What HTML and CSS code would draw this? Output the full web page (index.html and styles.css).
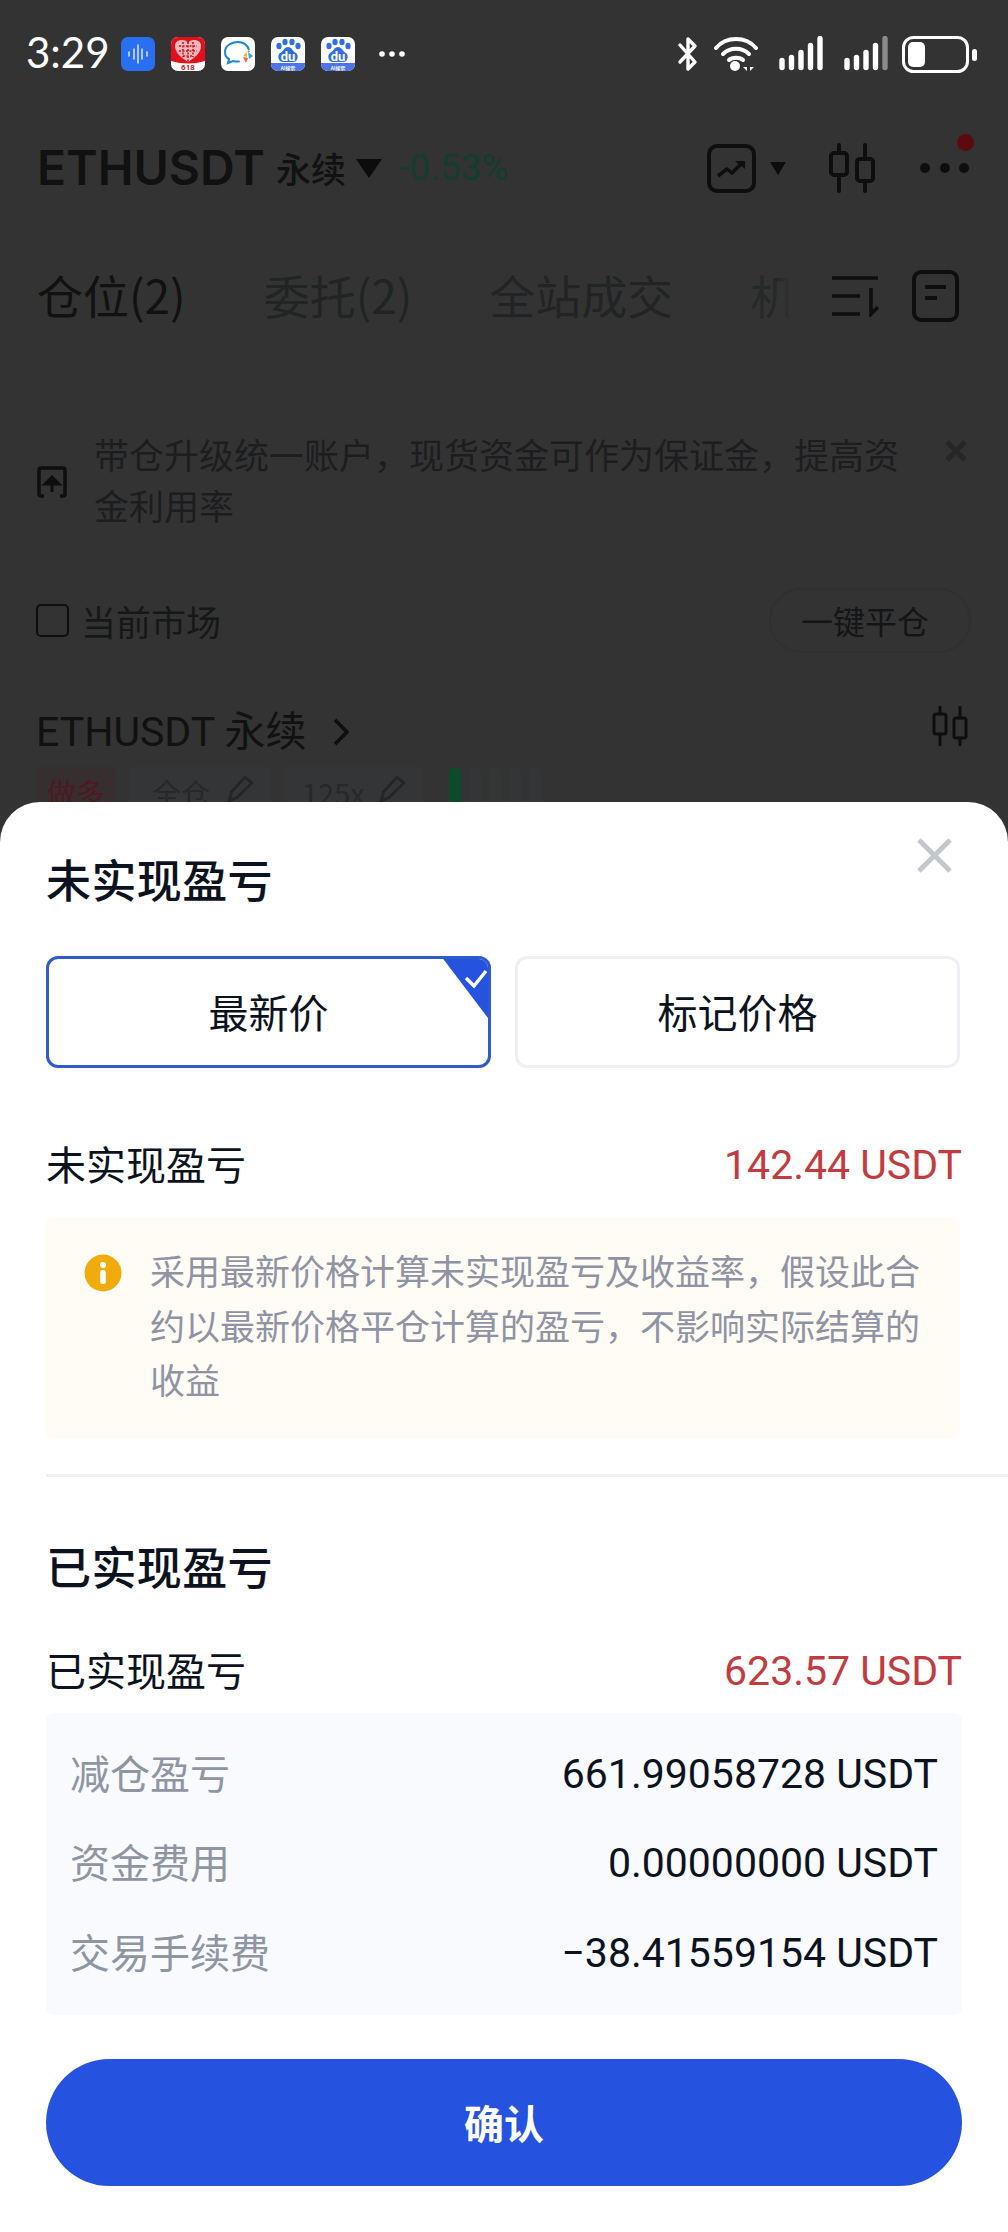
FILE: index.html
```html
<!DOCTYPE html>
<html lang="zh">
<head>
<meta charset="utf-8">
<title>未实现盈亏</title>
<link rel="stylesheet" href="styles.css">
</head>
<body>
<div class="page">
  <div class="behind">
    <div class="status">
      <span class="time">3:29</span>
      <div class="apps">
        <svg class="app" viewBox="0 0 34 34"><rect width="34" height="34" rx="7" fill="#2a6ff2"/><path d="M8 15v4M13 12v10M17 8v18M21 12v10M26 15v4" stroke="#dce8ff" stroke-width="1.5" stroke-linecap="round"/></svg>
        <svg class="app" viewBox="0 0 34 34"><rect width="34" height="34" rx="7" fill="#fff"/><path d="M0 7a7 7 0 0 1 7-7h20a7 7 0 0 1 7 7v17q-17 5-34 0z" fill="#e3101b"/><path d="M17 25C9 20 4 15 4 9c0-4 3-6 7-6 3 0 5 1 6 3 1-2 3-3 6-3 4 0 7 2 7 6 0 6-5 11-13 16z" fill="#f7b9bd"/><path d="M8 9h18M8 14h18M12 19h10M12 5v15M17 5v20M22 5v15" stroke="#d8101b" stroke-width="1.6" stroke-dasharray="2 1.5"/><text x="17" y="33" class="t618">618</text></svg>
        <svg class="app" viewBox="0 0 34 34"><rect width="34" height="34" rx="7" fill="#fff"/><path d="M17 5C10 5 4 9 4 15c0 3 2 6 4 7l-1 4 5-2c2 .5 4 .7 6 .5" fill="none" stroke="#1b87d6" stroke-width="2" stroke-linecap="round"/><path d="M17 5c5 0 10 3 11 8" fill="none" stroke="#1b87d6" stroke-width="2"/><path d="M27 15l5 4-4 3z" fill="#3aa3e0"/><path d="M26 15l-4 4 4 1z" fill="#f2b632"/><path d="M22 20l5 1-2 5z" fill="#ec6a2d"/><path d="M26 15l2-2 1 2z" fill="#6cb33f"/></svg>
        <svg class="app" viewBox="0 0 34 34"><rect width="34" height="34" rx="7" fill="#fff"/><path d="M0 26h34v1a7 7 0 0 1-7 7H7a7 7 0 0 1-7-7z" fill="#4f74e8"/><g fill="#2f6fe0"><ellipse cx="8" cy="9" rx="2.6" ry="3.2"/><ellipse cx="14" cy="5" rx="2.6" ry="3.3"/><ellipse cx="21" cy="5" rx="2.6" ry="3.3"/><ellipse cx="27" cy="9" rx="2.6" ry="3.2"/><path d="M17 10c4 0 4 4 8 6 3 2 2 9-3 9H12c-5 0-6-7-3-9 4-2 4-6 8-6z"/></g><text x="17" y="24" class="tdu">du</text><text x="17" y="32.500" class="tai">AI搜索</text></svg>
        <svg class="app" viewBox="0 0 34 34"><rect width="34" height="34" rx="7" fill="#fff"/><path d="M0 26h34v1a7 7 0 0 1-7 7H7a7 7 0 0 1-7-7z" fill="#4f74e8"/><g fill="#2f6fe0"><ellipse cx="8" cy="9" rx="2.6" ry="3.2"/><ellipse cx="14" cy="5" rx="2.6" ry="3.3"/><ellipse cx="21" cy="5" rx="2.6" ry="3.3"/><ellipse cx="27" cy="9" rx="2.6" ry="3.2"/><path d="M17 10c4 0 4 4 8 6 3 2 2 9-3 9H12c-5 0-6-7-3-9 4-2 4-6 8-6z"/></g><text x="17" y="24" class="tdu">du</text><text x="17" y="32.500" class="tai">AI搜索</text></svg>
        <svg class="more" viewBox="0 0 26 6"><circle cx="3" cy="3" r="2.8"/><circle cx="13" cy="3" r="2.8"/><circle cx="23" cy="3" r="2.8"/></svg>
      </div>
      <div class="sys">
        <svg class="bt" viewBox="0 0 23 36"><path d="M3 9l15 17-7 7V3l7 7L3 26" fill="none" stroke="#fff" stroke-width="3.4" stroke-linecap="round" stroke-linejoin="round"/></svg>
        <svg class="wifi" viewBox="0 0 44 36"><g fill="none" stroke="#fff" stroke-width="4" stroke-linecap="round"><path d="M2 12C12 0 32 0 42 12"/><path d="M9 18c7-7 19-7 26 0"/><path d="M15 24c3-3 11-3 14 0"/></g><circle cx="21" cy="30" r="5" fill="#fff"/><path d="M33 26v9l-4-4h4zM36 26v9l4-4h-4z" fill="#fff"/></svg>
        <svg class="sig" viewBox="0 0 44 36"><g stroke="#fff" stroke-width="5.400" stroke-linecap="round"><path d="M3 24.500v7M12.500 21.500v10M22 16.500v15M31.500 9.500v22M41 2.500v29"/></g></svg>
        <svg class="sig" viewBox="0 0 44 36"><g stroke="#fff" stroke-width="5.400" stroke-linecap="round"><path d="M3 24.500v7M12.500 21.500v10M22 16.500v15M31.500 9.500v22"/><path d="M41 2.500v29" stroke="#8b8b8b"/></g></svg>
        <svg class="batt" viewBox="0 0 75 37"><rect x="1.500" y="1.500" width="64" height="34" rx="10" fill="none" stroke="#fff" stroke-width="3"/><rect x="6" y="6" width="17" height="25" rx="5" fill="#fff"/><rect x="70" y="13" width="5" height="12" rx="2.500" fill="#fff"/></svg>
      </div>
    </div>

    <div class="symbolbar">
      <span class="sym">ETHUSDT</span>
      <span class="perp">永续</span>
      <span class="tri"></span>
      <span class="chg">-0.53%</span>
      <div class="symtools">
        <svg class="ic-chart" viewBox="0 0 49 49"><rect x="2" y="2" width="45" height="45" rx="8" fill="none" stroke="#0e0e0e" stroke-width="4"/><path d="M11 32l9-7 5 4 11-11" fill="none" stroke="#0e0e0e" stroke-width="3.500" stroke-linejoin="round"/><path d="M28 17h10v8z" fill="#0e0e0e"/></svg>
        <span class="tri small"></span>
        <svg class="ic-candle" viewBox="0 0 47 50"><g fill="none" stroke="#0e0e0e" stroke-width="4" stroke-linecap="round"><path d="M10 2v8M10 32v16M36 2v14M36 38v10"/><rect x="2" y="10" width="16" height="22" rx="3"/><rect x="28" y="16" width="16" height="22" rx="3"/></g></svg>
        <svg class="ic-dots" viewBox="0 0 50 10"><circle cx="5" cy="5" r="5"/><circle cx="25" cy="5" r="5"/><circle cx="44" cy="5" r="5"/></svg>
      </div>
      <span class="reddot"></span>
    </div>

    <div class="tabsbar">
      <span class="tab on">仓位(2)</span>
      <span class="tab">委托(2)</span>
      <span class="tab">全站成交</span>
      <span class="tab fade">机</span>
      <svg class="ic-sort" viewBox="0 0 48 42"><path d="M1 3h46M1 21h28M1 39h28M40 13v26l7-7" fill="none" stroke="#0e0e0e" stroke-width="3.600"/></svg>
      <svg class="ic-doc" viewBox="0 0 47 52"><rect x="2" y="2" width="43" height="48" rx="7" fill="none" stroke="#0e0e0e" stroke-width="4"/><path d="M13 17h21M13 28h12" stroke="#0e0e0e" stroke-width="4"/></svg>
    </div>

    <div class="notice">
      <svg class="ic-up" viewBox="0 0 30 32"><path d="M7 30H4a2 2 0 0 1-2-2V4a2 2 0 0 1 2-2h22a2 2 0 0 1 2 2v24a2 2 0 0 1-2 2h-3" fill="none" stroke="#0e0e0e" stroke-width="3.500"/><path d="M15 26V13M8 18l7-7 7 7z" stroke="#0e0e0e" stroke-width="3" fill="#0e0e0e"/></svg>
      <p class="notice-text">带仓升级统一账户，现货资金可作为保证金，提高资金利用率</p>
      <svg class="ic-x" viewBox="0 0 24 24"><path d="M3 3l18 18M21 3L3 21" stroke="#242628" stroke-width="5"/></svg>
    </div>

    <div class="filter">
      <span class="check"></span>
      <span class="filter-label">当前市场</span>
      <span class="closeall">一键平仓</span>
    </div>

    <div class="pos-head">
      <span class="pos-name">ETHUSDT 永续</span>
      <svg class="ic-chev" viewBox="0 0 16 28"><path d="M2 2l12 12L2 26" fill="none" stroke="#0e0e0e" stroke-width="3.600"/></svg>
      <svg class="ic-candle-s" viewBox="0 0 36 40"><g fill="none" stroke="#0e0e0e" stroke-width="3" stroke-linecap="round"><path d="M8 1v7M8 28v11M28 1v11M28 32v7"/><rect x="2" y="8" width="12" height="20" rx="2"/><rect x="22" y="12" width="12" height="20" rx="2"/></g></svg>
    </div>

    <div class="tags">
      <span class="tag red">做多</span>
      <span class="tag grey">全仓<svg class="pen" viewBox="0 0 24 24"><path d="M2 23l2-8L16 2l6 5L9 20z" fill="none" stroke="#232527" stroke-width="2.500"/></svg></span>
      <span class="tag grey lever">125x<svg class="pen" viewBox="0 0 24 24"><path d="M2 23l2-8L16 2l6 5L9 20z" fill="none" stroke="#232527" stroke-width="2.500"/></svg></span>
      <div class="bars"><i class="bar on"></i><i class="bar"></i><i class="bar"></i><i class="bar"></i><i class="bar"></i></div>
    </div>
  </div>

  <div class="sheet">
    <div class="sheet-head">
      <h2 class="h">未实现盈亏</h2>
      <svg class="close" viewBox="0 0 36 36"><path d="M2 2l32 32M34 2L2 34" stroke="#c3c6cd" stroke-width="5"/></svg>
    </div>
    <div class="choice">
      <div class="opt sel">最新价
        <svg class="corner" viewBox="0 0 50 66"><path d="M0 0h38a12 12 0 0 1 12 12v54z" fill="#2553e0"/><path d="M25 22l8 8 12-15" fill="none" stroke="#fff" stroke-width="3.500"/></svg>
      </div>
      <div class="opt">标记价格</div>
    </div>
    <div class="row first"><span class="lbl">未实现盈亏</span><span class="num red-n">142.44 USDT</span></div>
    <div class="tip">
      <svg class="info" viewBox="0 0 38 38"><circle cx="19" cy="19" r="18.500" fill="#f0ac0c"/><circle cx="19" cy="11" r="3" fill="#fff"/><rect x="16.200" y="16" width="5.600" height="14" rx="2.500" fill="#fff"/></svg>
      <p class="tip-text">采用最新价格计算未实现盈亏及收益率，假设此合约以最新价格平仓计算的盈亏，不影响实际结算的收益</p>
    </div>
    <div class="rule"></div>
    <h2 class="h h2nd">已实现盈亏</h2>
    <div class="row second"><span class="lbl">已实现盈亏</span><span class="num red-n">623.57 USDT</span></div>
    <div class="detail">
      <div class="drow"><span class="lbl dl">减仓盈亏</span><span class="num">661.99058728 USDT</span></div>
      <div class="drow"><span class="lbl dl">资金费用</span><span class="num">0.00000000 USDT</span></div>
      <div class="drow"><span class="lbl dl">交易手续费</span><span class="num">−38.41559154 USDT</span></div>
    </div>
    <div class="confirm">确认</div>
  </div>
</div>
</body>
</html>
```

FILE: styles.css
```css
* { box-sizing: border-box; }
html, body { margin: 0; padding: 0; }
body {
  width: 1008px;
  height: 2232px;
  overflow: hidden;
  background: #333333;
  font-family: "Noto Sans CJK SC", "Roboto", sans-serif;
}
.page { display: flex; flex-direction: column; height: 2232px; }
.behind { height: 802px; overflow: hidden; flex: none; color: #111; }

/* status bar */
.status { display: flex; align-items: center; height: 34px; margin-top: 37px; padding-left: 26px; position: relative; }
.time { font-family: "Lato", "Roboto", sans-serif; font-size: 42px; line-height: 30px; padding-bottom: 4px; color: #fff; width: 95px; }
.apps { display: flex; align-items: center; gap: 16px; }
.app { width: 34px; height: 34px; display: block; }
.more { width: 26px; height: 6px; fill: #fff; margin-left: 8px; }
.sys { display: flex; align-items: center; margin-left: auto; padding-right: 31px; }
.bt { width: 23px; height: 36px; margin-right: 14px; }
.wifi { width: 44px; height: 36px; margin-right: 21px; }
.sig { width: 44px; height: 36px; margin-right: 21px; }
.sig + .batt { margin-left: -7px; }
.batt { width: 75px; height: 37px; }
.t618 { font: 700 8px "Roboto", sans-serif; fill: #d8101b; text-anchor: middle; }
.tdu { font: 700 13px "Roboto", sans-serif; fill: #fff; text-anchor: middle; }
.tai { font: 500 5px "Noto Sans CJK SC", sans-serif; fill: #fff; text-anchor: middle; }

/* symbol */
.symbolbar { display: flex; align-items: center; height: 52px; margin-top: 71px; padding-left: 37px; position: relative; }
.sym { font: 600 48px/52px "Inter", "Roboto", sans-serif; color: #111; }
.perp { font-size: 35px; font-weight: 500; line-height: 52px; margin-left: 11px; color: #111; }
.tri { width: 0; height: 0; border-left: 13px solid transparent; border-right: 13px solid transparent; border-top: 19px solid #0c0c0c; margin-left: 10px; }
.tri.small { border-left-width: 8.5px; border-right-width: 8.5px; border-top-width: 13px; margin-left: 14px; }
.chg { font: 400 37px/52px "Roboto", sans-serif; color: #123d30; margin-left: 17px; }
.symtools { display: flex; align-items: center; margin-left: auto; padding-right: 38px; }
.ic-chart { width: 49px; height: 49px; }
.ic-candle { width: 47px; height: 50px; margin-left: 43px; }
.ic-dots { width: 50px; height: 10px; fill: #0e0e0e; margin-left: 44px; }
.reddot { position: absolute; right: 34px; top: -8px; width: 17px; height: 17px; border-radius: 50%; background: #5c0a0e; }

/* tabs */
.tabsbar { display: flex; align-items: center; height: 52px; margin-top: 76px; padding-left: 37px; font-size: 46px; }
.tab { line-height: 48px; padding-bottom: 4px; color: #212425; margin-right: 77px; white-space: nowrap; }
.tab.on { color: #111; margin-right: 78px; }
.tab.fade { margin-right: 0; color: #26292a; -webkit-mask-image: linear-gradient(to right, #000 60%, transparent 92%); mask-image: linear-gradient(to right, #000 60%, transparent 92%); }
.ic-sort { width: 48px; height: 42px; margin-left: 35px; }
.ic-doc { width: 47px; height: 52px; margin-left: 33px; }

/* notice */
.notice { display: flex; align-items: center; margin-top: 103px; padding: 0 37px; position: relative; height: 108px; }
.ic-up { width: 30px; height: 32px; flex: none; margin-top: 5px; }
.notice-text { margin: 0 0 0 27px; width: 810px; font-size: 35px; line-height: 51px; color: #1c1d1f; }
.ic-x { width: 24px; height: 24px; position: absolute; right: 40px; top: 14px; }

/* filter */
.filter { display: flex; align-items: center; height: 65px; margin-top: 55px; padding-left: 36px; }
.check { width: 33px; height: 33px; border: 2.500px solid #0e0e0e; border-radius: 5px; }
.filter-label { font-size: 35px; line-height: 40px; margin-left: 12px; color: #161718; }
.closeall { margin-left: auto; margin-right: 37px; width: 202px; height: 65px; border: 2px solid #2f3031; border-radius: 33px; padding-right: 10px; text-align: center; font-size: 32px; line-height: 60px; color: #141516; }

/* position */
.pos-head { display: flex; align-items: center; height: 44px; margin-top: 57px; padding: 0 40px 0 36px; }
.pos-name { font: 400 41px/44px "Roboto", "Noto Sans CJK SC", sans-serif; color: #111; white-space: nowrap; }
.ic-chev { width: 16px; height: 28px; margin-left: 26px; }
.ic-candle-s { width: 36px; height: 40px; margin-left: auto; margin-top: -12px; }
.tags { display: flex; align-items: flex-start; height: 50px; margin-top: 13px; padding-left: 36px; gap: 14px; }
.tag { display: flex; align-items: center; height: 50px; border-radius: 5px; font-size: 29px; line-height: 50px; padding: 0 12px; gap: 17px; white-space: nowrap; }
.tag.red { background: #362e2f; color: #4c1a1f; width: 80px; justify-content: center; }
.tag.grey { background: #343536; color: #26282a; padding: 0 16px 0 22px; }
.tag.grey.lever { padding-left: 18px; gap: 14px; }
.pen { width: 27px; height: 27px; margin-top: -8px; }
.bars { display: flex; gap: 8px; margin-left: 13px; }
.bar { display: block; width: 12px; height: 50px; border-radius: 6px; background: #343536; }
.bar.on { background: #0d4a2b; }

/* sheet */
.sheet { flex: 1; background: #fff; border-radius: 40px 40px 0 0; padding: 0 46px; position: relative; color: #0c1220; }
.sheet-head { display: flex; align-items: center; justify-content: space-between; padding-top: 52px; height: 106px; }
.h { margin: 0; font-size: 45px; letter-spacing: .4px; line-height: 50px; padding-bottom: 4px; font-weight: 500; color: #0c1220; }
.close { position: absolute; right: 56px; top: 36px; width: 35px; height: 35px; }
.choice { display: grid; grid-template-columns: 445px 445px; gap: 24px; margin-top: 48px; }
.opt { position: relative; height: 112px; border: 3px solid #eef0f4; border-radius: 12px; padding-bottom: 2px; display: flex; align-items: center; justify-content: center; font-size: 40px; font-weight: 400; color: #0c1220; overflow: hidden; }
.opt.sel { border: 3px solid #2f5cc8; }
.corner { position: absolute; right: -3px; top: -3px; width: 50px; height: 66px; }
.row { display: flex; justify-content: space-between; align-items: center; height: 50px; color: #0c1220; }
.lbl { font-size: 40px; line-height: 46px; padding-bottom: 4px; white-space: nowrap; }
.row.first { margin-top: 72px; }
.num { font: 400 41px/50px "Roboto", sans-serif; white-space: nowrap; }
.red-n { color: #c23c3f; }
.tip { display: flex; align-items: flex-start; margin: 27px 2px 0 0; height: 222px; background: #fffbf5; border-radius: 8px; padding: 26px 40px 0 38px; }
.info { width: 38px; height: 38px; flex: none; margin-top: 11px; }
.tip-text { margin: 0 0 0 28px; font-size: 35px; line-height: 54.500px; color: #8f93a3; }
.rule { height: 3px; background: #eef0f4; margin: 35px -46px 0 0; }
.h2nd { margin-top: 64px; }
.row.second { margin-top: 51px; }
.detail { margin-top: 17px; height: 302px; background: #f8fafd; border-radius: 8px; padding: 16px 24px 0; }
.drow { display: flex; justify-content: space-between; align-items: center; height: 89.500px; }
.dl { color: #8f95a3; }
.confirm { margin-top: 44px; height: 127px; border-radius: 64px; background: #2553e0; color: #fff; display: flex; align-items: center; justify-content: center; padding-bottom: 2px; font-size: 40px; font-weight: 700; }
```
